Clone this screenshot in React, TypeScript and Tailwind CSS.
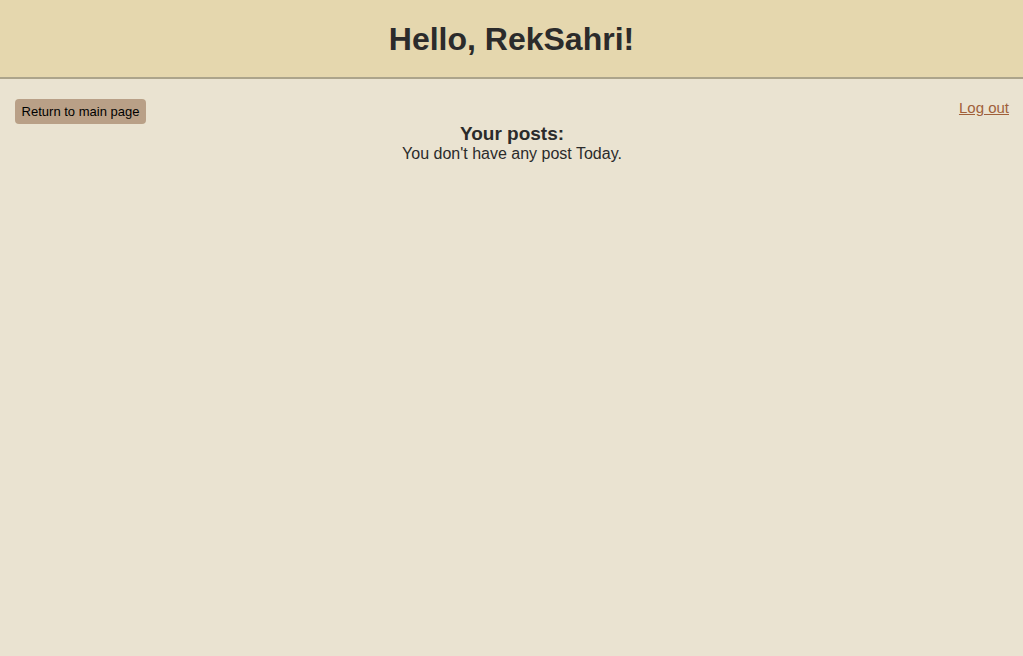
export default function App() {
  return (
    <div className="min-h-[656px] bg-[#eae3d1] font-['Liberation_Sans',Arial,sans-serif] text-[#2b2b2b]">
      <header className="flex h-[79px] items-center justify-center border-b-2 border-[#aca48b] bg-[#e5d7ae]">
        <h1 className="text-[32px] font-bold leading-none">Hello, RekSahri!</h1>
      </header>
      <main className="pl-[15px] pr-[14px] pt-[20px]">
        <div className="flex items-start justify-between">
          <button
            type="button"
            className="h-[25px] w-[131px] rounded-[4px] bg-[#b9a087] text-[13px] text-black"
          >
            Return to main page
          </button>
          <a href="#" className="-mt-[2px] text-[15px] text-[#a0603a] underline">
            Log out
          </a>
        </div>
        <div className="text-center">
          <h2 className="text-[19px] leading-[20px] font-bold">Your posts:</h2>
          <p className="mt-[1px] text-[16px] leading-[18px]">You don't have any post Today.</p>
        </div>
      </main>
    </div>
  );
}
